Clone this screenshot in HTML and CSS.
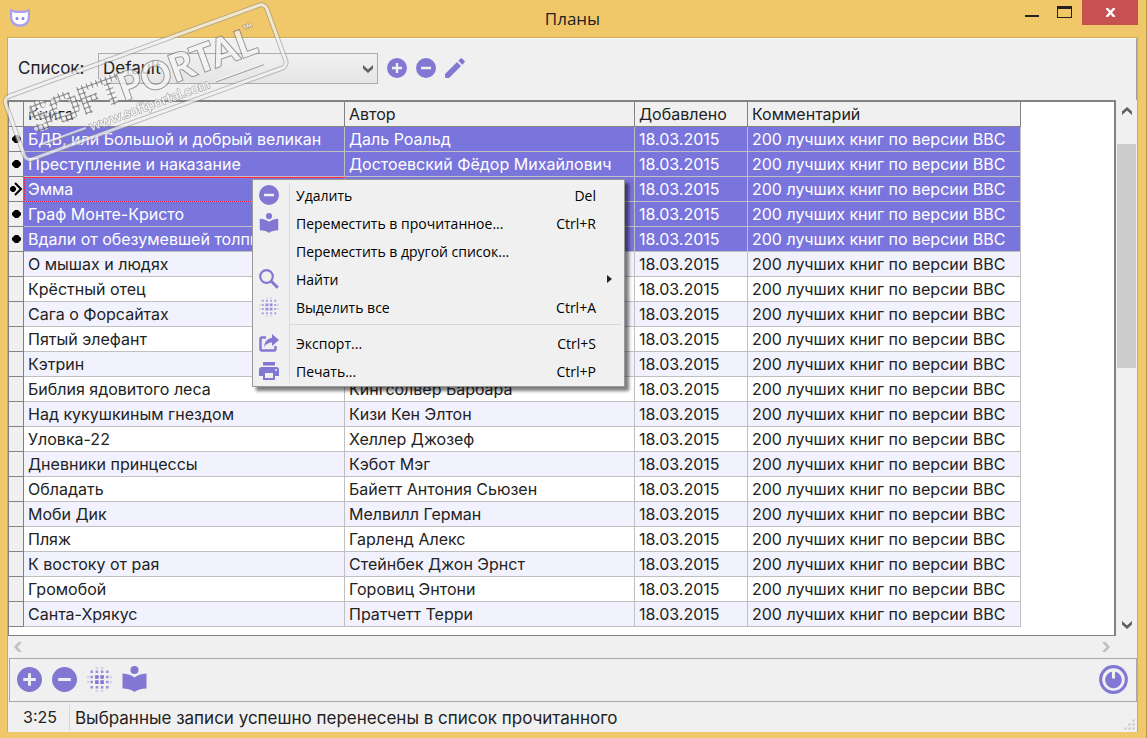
FILE: index.html
```html
<!DOCTYPE html>
<html lang="ru">
<head>
  <meta charset="UTF-8">
  <title>Планы</title>
  <link rel="stylesheet" href="styles.css">
</head>
<body>
  <!-- общие иконки -->
  <svg class="sprite" width="0" height="0">
    <symbol id="plus" viewBox="0 0 24 24"><path fill-rule="evenodd" d="M12 0a12 12 0 1 0 0 24a12 12 0 1 0 0-24zM10.600 6h2.800v4.600h4.600v2.800h-4.600v4.600h-2.800v-4.600h-4.600v-2.800h4.600z"/></symbol>
    <symbol id="minus" viewBox="0 0 24 24"><path fill-rule="evenodd" d="M12 0a12 12 0 1 0 0 24a12 12 0 1 0 0-24zM6 10.600h12v2.800h-12z"/></symbol>
    <symbol id="pencil" viewBox="0 0 20 20"><path d="M0 16L12 4L16 8L4 20H1.500Q0 20 0 18.500zM13.300 2.700L15.500 .6Q16.500 -.2 17.400 .7L19.400 2.700Q20.200 3.600 19.400 4.500L17.300 6.700z"/></symbol>
    <symbol id="reader" viewBox="0 0 24 26"><circle cx="12" cy="4" r="4"/><path d="M0 7.500Q8 8 12 11.500Q16 8 24 7.500V22.500Q16 22.500 12 26Q8 22.500 0 22.500z"/></symbol>
    <symbol id="dots" viewBox="0 0 24 24">
      <g stroke-width="2.400" fill="none" stroke-dasharray="2.400 2.600">
        <path opacity=".25" d="M8.300 1H16M8.300 23H16M1 8.300V16M23 8.300V16"/>
        <path opacity=".8" d="M3.300 4.500H20.700M3.300 9.500H20.700M3.300 14.500H20.700M3.300 19.500H20.700"/>
      </g>
      <path d="M7.800 7.800h3.400v3.400h-3.400zM12.800 7.800h3.400v3.400h-3.400zM7.800 12.800h3.400v3.400h-3.400zM12.800 12.800h3.400v3.400h-3.400z"/>
    </symbol>
    <symbol id="search" viewBox="0 0 20 20"><g fill="none" stroke-width="2.200"><circle cx="7.500" cy="7.500" r="6.300"/><path stroke-width="3" d="M12 12l6.800 6.800"/></g></symbol>
    <symbol id="export" viewBox="0 0 20 18"><path fill="none" stroke-width="2.400" d="M7 3.500H3Q1.500 3.500 1.500 5V15Q1.500 16.500 3 16.500H15Q16.500 16.500 16.500 15V12"/><path d="M13 0L20 6L13 12V8.500Q8 8.500 5 13Q5.500 5 13 3.800z"/></symbol>
    <symbol id="print" viewBox="0 0 20 18"><path fill-rule="evenodd" d="M4 0H16V3.500H4zM3 5H17Q20 5 20 8V14H16V18H4V14H0V8Q0 5 3 5zM6 11V16H14V11zM17 7a1 1 0 1 0 0 2a1 1 0 1 0 0-2z"/></symbol>
    <symbol id="power" viewBox="0 0 28 28"><circle cx="14" cy="14" r="12.400" fill="none" stroke-width="3"/><path d="M12.500 6.500A8 8 0 1 0 15.500 6.500V13H12.500z"/></symbol>
    <symbol id="chevron" viewBox="0 0 10 8"><path d="M0 0L5 4.500L10 0V3.500L5 8L0 3.500z"/></symbol>
  </svg>

  <div class="window">
    <header class="titlebar">
      <svg class="logo" width="20" height="18" viewBox="0 0 20 18"><path d="M0 0L5 1.500H15L20 0V8Q20 17.500 10 18Q0 17.500 0 8z" fill="#a9a0ee"/><path d="M2.200 3L5.500 4H14.500L17.800 3V8Q17.500 15 10 15.500Q2.500 15 2.200 8z" fill="#fff"/><circle cx="7" cy="9.500" r="1.500" fill="#8c82e0"/><circle cx="13" cy="9.500" r="1.500" fill="#8c82e0"/></svg>
      <h1>Планы</h1>
      <div class="window-buttons">
        <button aria-label="Свернуть"><svg width="14" height="10"><path d="M0 8h14v2H0z" fill="#222"/></svg></button>
        <button aria-label="Развернуть"><svg width="15" height="12"><path fill-rule="evenodd" d="M0 0h15v12H0zM1 3v8h13V3z" fill="#222"/></svg></button>
        <button class="close" aria-label="Закрыть"><svg width="11" height="9" viewBox="0 0 11 9"><path d="M1.500 0L9.500 9M9.500 0L1.500 9" stroke="#fff" stroke-width="2.400"/></svg></button>
      </div>
    </header>

    <main class="client">
      <div class="toolbar">
        <label for="list">Список:</label>
        <div class="combo">
          <select id="list"><option>Default</option></select>
          <svg width="10" height="8"><use href="#chevron"/></svg>
        </div>
        <button class="icon" aria-label="Добавить список"><svg width="20" height="20"><use href="#plus"/></svg></button>
        <button class="icon" aria-label="Удалить список"><svg width="20" height="20"><use href="#minus"/></svg></button>
        <button class="icon" aria-label="Переименовать"><svg width="20" height="20"><use href="#pencil"/></svg></button>
      </div>

      <div class="grid-area">
        <div class="grid">
          <table class="books">
            <colgroup><col class="c-mark"><col class="c-book"><col class="c-author"><col class="c-date"><col class="c-note"></colgroup>
            <thead>
              <tr><th></th><th>Книга</th><th>Автор</th><th>Добавлено</th><th>Комментарий</th></tr>
            </thead>
            <tbody id="rows"></tbody>
          </table>
        </div>
        <div class="vscroll">
          <button aria-label="Вверх"><svg class="up" width="10" height="8"><use href="#chevron"/></svg></button>
          <div class="track"><div class="thumb"></div></div>
          <button aria-label="Вниз"><svg width="10" height="8"><use href="#chevron"/></svg></button>
        </div>
      </div>
      <div class="hscroll">
        <button aria-label="Влево" disabled><svg class="left" width="10" height="8"><use href="#chevron"/></svg></button>
        <button aria-label="Вправо" disabled><svg class="right" width="10" height="8"><use href="#chevron"/></svg></button>
      </div>

      <div class="actions">
        <button class="icon" aria-label="Добавить"><svg width="25" height="25"><use href="#plus"/></svg></button>
        <button class="icon" aria-label="Удалить"><svg width="25" height="25"><use href="#minus"/></svg></button>
        <button class="icon" aria-label="Выделить все"><svg width="25" height="25"><use href="#dots"/></svg></button>
        <button class="icon" aria-label="В прочитанное"><svg width="25" height="26"><use href="#reader"/></svg></button>
        <button class="icon power" aria-label="Выход"><svg width="29" height="29"><use href="#power"/></svg></button>
      </div>

      <footer class="status">
        <span class="count">3:25</span>
        <span class="message">Выбранные записи успешно перенесены в список прочитанного</span>
        <svg class="grip" width="11" height="11"><path d="M8 0h3v3H8zM4 4h3v3H4zM8 4h3v3H8zM0 8h3v3H0zM4 8h3v3H4zM8 8h3v3H8z" fill="#c4c4c4" stroke="#f0f0f0"/></svg>
      </footer>
    </main>

    <div class="menu" role="menu">
      <button role="menuitem"><svg width="20" height="20"><use href="#minus"/></svg><span>Удалить</span><kbd>Del</kbd></button>
      <button role="menuitem"><svg width="20" height="20"><use href="#reader"/></svg><span>Переместить в прочитанное...</span><kbd>Ctrl+R</kbd></button>
      <button role="menuitem"><i></i><span>Переместить в другой список...</span></button>
      <button class="sub" role="menuitem"><svg width="20" height="20"><use href="#search"/></svg><span>Найти</span><svg class="arrow" width="5" height="8"><path d="M0 0l5 4-5 4z"/></svg></button>
      <button role="menuitem"><svg class="pale" width="20" height="20"><use href="#dots"/></svg><span>Выделить все</span><kbd>Ctrl+A</kbd></button>
      <hr>
      <button role="menuitem"><svg width="20" height="18"><use href="#export"/></svg><span>Экспорт...</span><kbd>Ctrl+S</kbd></button>
      <button role="menuitem"><svg width="20" height="18"><use href="#print"/></svg><span>Печать...</span><kbd>Ctrl+P</kbd></button>
    </div>

    <svg class="stamp" width="300" height="180">
      <defs>
        <pattern id="cells" width="5" height="5" patternUnits="userSpaceOnUse">
          <rect width="5" height="5" fill="#666"/>
          <rect width="4" height="4" rx="1" fill="#fafafa"/>
        </pattern>
      </defs>
      <g transform="translate(1 97) rotate(-20)">
        <rect class="edge" x="2" y="2" width="278" height="67" rx="6"/>
        <rect class="frame" x="2" y="2" width="278" height="67" rx="6"/>
        <text class="soft" x="20" y="45">SOFT</text>
        <text class="portal" x="114" y="46">PORTAL</text>
        <text class="tm" x="251" y="25">™</text>
        <text class="site" x="73" y="63">www.softportal.com</text>
        <path class="rule" d="M21 58H69M207 58H258"/>
      </g>
    </svg>
  </div>

  <script>
    const books = [
      ['БДВ, или Большой и добрый великан', 'Даль Роальд'],
      ['Преступление и наказание', 'Достоевский Фёдор Михайлович'],
      ['Эмма', ''],
      ['Граф Монте-Кристо', ''],
      ['Вдали от обезумевшей толпы', ''],
      ['О мышах и людях', ''],
      ['Крёстный отец', ''],
      ['Сага о Форсайтах', ''],
      ['Пятый элефант', ''],
      ['Кэтрин', ''],
      ['Библия ядовитого леса', 'Кингсолвер Барбара'],
      ['Над кукушкиным гнездом', 'Кизи Кен Элтон'],
      ['Уловка-22', 'Хеллер Джозеф'],
      ['Дневники принцессы', 'Кэбот Мэг'],
      ['Обладать', 'Байетт Антония Сьюзен'],
      ['Моби Дик', 'Мелвилл Герман'],
      ['Пляж', 'Гарленд Алекс'],
      ['К востоку от рая', 'Стейнбек Джон Эрнст'],
      ['Громобой', 'Горовиц Энтони'],
      ['Санта-Хрякус', 'Пратчетт Терри']
    ];
    const selected = 5;
    const current = 2;
    const dot = '<path d="M5 3h3l3 3v2l-3 3H5L2 8V6z"/>';
    const arrow = '<path d="M2 4h2l2 2v2l-2 2H2L0 8V6z"/><path d="M5 1l6 6-6 6" fill="none" stroke="#000" stroke-width="2"/>';

    let html = '';
    books.forEach(([book, author], i) => {
      let mark = '';
      if (i < selected) {
        mark = `<svg width="13" height="14">${i === current ? arrow : dot}</svg>`;
      }
      const cls = (i < selected ? 'selected' : '') + (i === current ? ' current' : '');
      html += `<tr class="${cls}"><th>${mark}</th><td>${book}</td><td>${author}</td><td>18.03.2015</td><td>200 лучших книг по версии BBC</td></tr>`;
    });
    document.getElementById('rows').innerHTML = html;
  </script>
</body>
</html>
```
FILE: styles.css
```css
* {
  box-sizing: border-box;
}
body {
  margin: 0;
  font-family: Inter, "Noto Sans", sans-serif;
  font-size: 16px;
  color: #222;
}
button {
  padding: 0;
  border: none;
  background: none;
  font: inherit;
  color: inherit;
}
svg {
  display: block;
}
.sprite {
  position: absolute;
}
.window {
  position: relative;
  display: flex;
  flex-direction: column;
  height: 100vh;
  padding: 0 8px 6px 7px;
  background: #f0c869;
  border-right: 1px solid #b79650;
  overflow: hidden;
}

/* заголовок окна */
.titlebar {
  display: grid;
  grid-template-columns: 1fr auto 1fr;
  align-items: start;
  height: 37px;
}
.titlebar h1 {
  margin: 0;
  font: 17px/38px "Open Sans", sans-serif;
}
.logo {
  margin: 9px 3px;
}
.window-buttons {
  display: flex;
  justify-content: flex-end;
}
.window-buttons button {
  width: 32px;
  height: 24px;
  display: flex;
  align-items: center;
  justify-content: center;
}
.window-buttons .close {
  width: 56px;
  height: 25px;
  margin-left: 2px;
  background: #c75050;
}

.client {
  flex: 1;
  min-height: 0;
  display: flex;
  flex-direction: column;
  background: #f0f0f0;
  border: 1px solid #cfab58;
  border-bottom: none;
}
.toolbar {
  display: flex;
  align-items: center;
  gap: 9px;
  height: 62px;
  padding: 0 10px 3px;
  border-top: 1px solid #fff;
  border-right: 1px solid #a0a0a0;
  font-size: 17px;
}
.toolbar label {
  width: 71px;
}
.icon svg, .menu svg {
  fill: #8278d4;
  stroke: #8278d4;
  stroke-width: 0;
}
.combo {
  position: relative;
}
.combo select {
  display: block;
  width: 280px;
  height: 31px;
  padding: 0 4px;
  appearance: none;
  border: 1px solid #acacac;
  border-radius: 0;
  background: linear-gradient(#f0f0f0, #e5e5e5);
  font: inherit;
  color: inherit;
}
.combo svg {
  position: absolute;
  right: 5px;
  top: 12px;
  fill: #606060;
}

/* таблица */
.grid-area {
  flex: 1;
  min-height: 0;
  display: flex;
}
.grid {
  flex: 1;
  min-width: 0;
  overflow: hidden;
  background: #fff;
  border: 1px solid #828282;
  border-width: 2px 2px 1px 1px;
}
.books {
  width: 1012px;
  table-layout: fixed;
  border-collapse: separate;
  border-spacing: 0;
}
.c-mark {
  width: 15px;
}
.c-book {
  width: 321px;
}
.c-author {
  width: 290px;
}
.c-date {
  width: 113px;
}
.books th, .books td {
  height: 25px;
  padding: 0 4px;
  border: 1px solid #c0c0c0;
  border-width: 0 1px 1px 0;
  line-height: 24px;
  font-weight: normal;
  text-align: left;
  white-space: nowrap;
  overflow: hidden;
}
.books th {
  padding-right: 0;
  background: #f0f0f0;
  border-color: #828282;
}
.books tbody th {
  padding: 0 1px;
}
.books tbody tr:nth-child(even) td {
  background: #f2f2fe;
}
.books tbody tr.selected td {
  background: #7975dd;
  color: #fff;
}
.books .current td:nth-child(2) {
  outline: 1px dotted #ff1030;
  outline-offset: -1px;
}

/* полосы прокрутки */
.vscroll {
  display: flex;
  flex-direction: column;
  width: 21px;
  padding: 0 1px;
}
.vscroll button {
  height: 22px;
  display: flex;
  align-items: center;
  justify-content: center;
}
.vscroll svg {
  fill: #606060;
}
.up {
  transform: rotate(180deg);
}
.left {
  transform: rotate(90deg);
}
.right {
  transform: rotate(-90deg);
}
.track {
  flex: 1;
  padding: 22px 0;
}
.thumb {
  height: 50%;
  background: #cdcdcd;
}
.hscroll {
  display: flex;
  justify-content: space-between;
  align-items: center;
  height: 22px;
  padding: 0 26px 0 5px;
}
.hscroll svg {
  fill: #c0c0c0;
}

.actions {
  display: flex;
  align-items: center;
  gap: 10px;
  height: 44px;
  margin-left: 1px;
  padding: 0 8px 2px 7px;
  border: 1px solid #a8a8a8;
}
.power {
  margin-left: auto;
}
.status {
  display: flex;
  align-items: center;
  height: 30px;
  padding: 3px 2px 2px 0;
}
.count {
  width: 62px;
  padding-left: 15px;
  line-height: 25px;
  border-right: 1px solid #d7d7d7;
}
.message {
  flex: 1;
  padding-left: 5px;
  font-size: 17px;
}
.grip {
  align-self: flex-end;
}

/* контекстное меню */
.menu {
  position: absolute;
  left: 252px;
  top: 179px;
  width: 373px;
  padding: 1px;
  background: linear-gradient(#dcdcdc, #dcdcdc) 36px 3px / 1px 200px no-repeat #f0f0f0;
  border: 1px solid #989898;
  box-shadow: 4px 4px 3px rgba(0, 0, 0, .5);
  font: 14px "Open Sans", sans-serif;
  color: #000;
}
.menu button {
  display: grid;
  grid-template-columns: 20px 1fr auto;
  column-gap: 17px;
  align-items: center;
  width: 100%;
  height: 28px;
  padding: 0 27px 0 5px;
  text-align: left;
}
.menu .sub {
  padding-right: 11px;
}
.menu kbd {
  font: inherit;
}
.menu .arrow {
  fill: #222;
}
.menu .pale {
  opacity: .8;
}
.menu hr {
  height: 1px;
  margin: 3px 2px 4px 36px;
  border: none;
  background: #d7d7d7;
}

/* штамп поверх окна */
.stamp {
  position: absolute;
  left: 0;
  top: 0;
  pointer-events: none;
  opacity: .75;
}
.stamp text {
  font-family: Lato, sans-serif;
  font-weight: bold;
  fill: #f6f6f6;
  stroke: #7a7a7a;
  stroke-width: 2px;
  paint-order: stroke;
}
.stamp .portal {
  font-size: 38px;
}
.stamp .soft {
  font-size: 38px;
  font-weight: 900;
  fill: url(#cells);
  stroke: url(#cells);
}
.stamp .site {
  font-size: 14px;
  stroke-width: 1px;
}
.stamp .tm {
  font-size: 13px;
  stroke-width: 1px;
}
.stamp .edge {
  fill: none;
  stroke: #888;
  stroke-width: 5px;
  opacity: .7;
}
.stamp .frame {
  fill: none;
  stroke: #f2f2f2;
  stroke-width: 3px;
}
.stamp .rule {
  stroke: #f2f2f2;
  stroke-width: 2px;
  filter: drop-shadow(0 1px 0 #888);
}
```
